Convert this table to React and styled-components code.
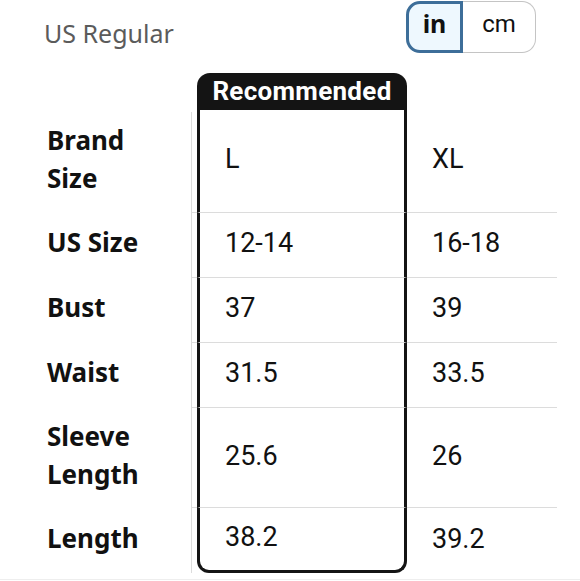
import React from 'react';
import styled, { createGlobalStyle } from 'styled-components';

const rows = [
  { label: ['Brand', 'Size'], rec: 'L', next: 'XL', height: 102 },
  { label: ['US Size'], rec: '12-14', next: '16-18', height: 65 },
  { label: ['Bust'], rec: '37', next: '39', height: 65 },
  { label: ['Waist'], rec: '31.5', next: '33.5', height: 65 },
  { label: ['Sleeve', 'Length'], rec: '25.6', next: '26', height: 100 },
  { label: ['Length'], rec: '38.2', next: '39.2', height: 66 },
];

const App = () => {
  const rowTemplate = ['37px', ...rows.map((r) => `${r.height}px`)].join(' ');
  return (
    <Page>
      <GlobalStyle />
      <Header>
        <Fit>US Regular</Fit>
        <Toggle>
          <UnitButton $active>in</UnitButton>
          <UnitButton>cm</UnitButton>
        </Toggle>
      </Header>
      <Table style={{ gridTemplateRows: rowTemplate }}>
        <span />
        <span />
        <RecHeader>Recommended</RecHeader>
        <span />
        {rows.map((row, i) => (
          <React.Fragment key={row.rec}>
            <Label>
              {row.label.map((line) => (
                <div key={line}>{line}</div>
              ))}
            </Label>
            <Gutter $first={i === 0} />
            <RecCell $first={i === 0} $last={i === rows.length - 1}>
              {row.rec}
            </RecCell>
            <Cell $first={i === 0}>{row.next}</Cell>
          </React.Fragment>
        ))}
      </Table>
      <Footer />
    </Page>
  );
};

export default App;

const GlobalStyle = createGlobalStyle`
  body {
    margin: 0;
    background: #fff;
  }
`;

const Page = styled.div`
  width: 580px;
  height: 581px;
  padding-top: 1px;
  box-sizing: border-box;
  overflow: hidden;
  font-family: Roboto, 'Liberation Sans', sans-serif;
  color: #111;
`;

const Header = styled.div`
  display: flex;
  justify-content: space-between;
  align-items: flex-start;
  padding: 0 44px 0 44px;
  height: 72px;
`;

const Fit = styled.div`
  font-family: 'Noto Sans', sans-serif;
  font-size: 25px;
  color: #5b5b5b;
  padding-top: 15px;
`;

const Toggle = styled.div`
  display: flex;
  height: 52px;
`;

const UnitButton = styled.div`
  display: flex;
  align-items: center;
  justify-content: center;
  box-sizing: border-box;
  font-family: ${({ $active }) => ($active ? "'Noto Sans'" : 'Roboto')}, sans-serif;
  font-size: ${({ $active }) => ($active ? 25 : 24)}px;
  font-weight: ${({ $active }) => ($active ? 700 : 400)};
  padding-bottom: ${({ $active }) => ($active ? 8 : 6)}px;
  width: ${({ $active }) => ($active ? 57 : 73)}px;
  background: ${({ $active }) => ($active ? '#eef8fe' : '#fff')};
  border: ${({ $active }) => ($active ? '3px solid #3d6e99' : '1px solid #c4c4c4')};
  border-left-width: ${({ $active }) => ($active ? 3 : 0)}px;
  border-radius: ${({ $active }) => ($active ? '14px 0 0 14px' : '0 14px 14px 0')};
`;

const Table = styled.div`
  display: grid;
  grid-template-columns: 191px 6px 210px 150px;
`;

const RecHeader = styled.div`
  background: #141414;
  color: #fff;
  border-radius: 13px 13px 0 0;
  display: flex;
  align-items: center;
  justify-content: center;
  font-size: 26px;
  font-weight: 700;
  letter-spacing: 0.3px;
  padding-bottom: 1px;
`;

const Label = styled.div`
  display: flex;
  flex-direction: column;
  justify-content: center;
  padding-left: 47px;
  padding-bottom: 5px;
  font-family: 'Noto Sans', sans-serif;
  font-weight: 700;
  font-size: 26px;
  line-height: 38px;
`;

const Gutter = styled.div`
  border-left: 1px solid #dcdcdc;
  border-top: ${({ $first }) => ($first ? 'none' : '1px solid #dcdcdc')};
  margin-top: ${({ $first }) => ($first ? 2 : 0)}px;
`;

const Cell = styled.div`
  display: flex;
  align-items: center;
  box-sizing: border-box;
  padding-left: 25px;
  padding-bottom: 4px;
  font-size: 27px;
  border-top: ${({ $first }) => ($first ? 'none' : '1px solid #dcdcdc')};
`;

const RecCell = styled(Cell)`
  border-left: 3px solid #141414;
  border-right: 3px solid #141414;
  border-bottom: ${({ $last }) => ($last ? '3px solid #141414' : 'none')};
  border-radius: ${({ $last }) => ($last ? '0 0 12px 12px' : '0')};
`;

const Footer = styled.div`
  margin-top: 6px;
  border-top: 1px solid #eeeeee;
`;
